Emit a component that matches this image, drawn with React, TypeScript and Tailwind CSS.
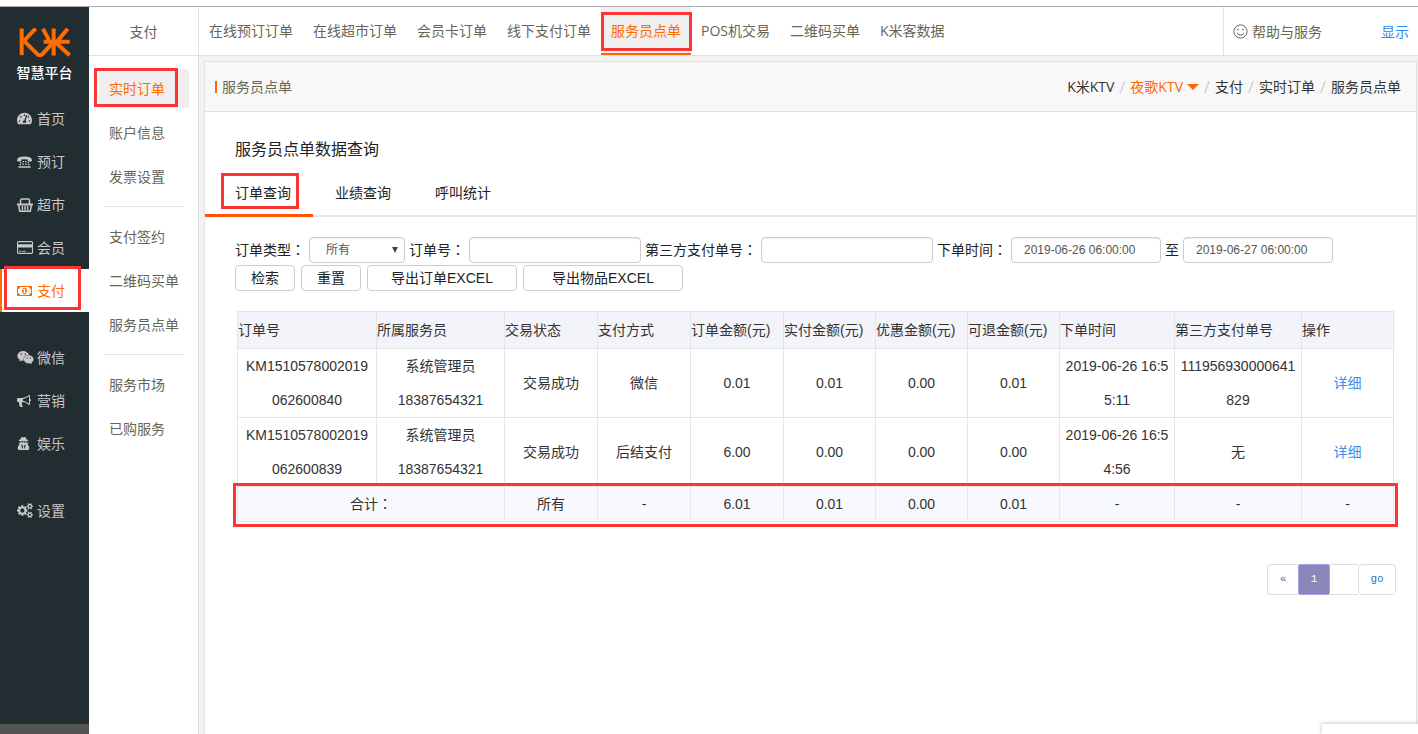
import React, { Fragment } from "react";
import type { ReactNode } from "react";
import { FaTachometerAlt, FaUserSecret, FaWeixin } from "react-icons/fa";

const Mark = ({ className }: { className: string }) => (
  <span aria-hidden="true" className={`pointer-events-none absolute z-10 border-3 border-[#fa3534] ${className}`} />
);

const Colon = () => <span className="font-['Noto_Sans_CJK_TC',sans-serif] leading-none">：</span>;

const Logo = () => (
  <svg viewBox="22 14 156 86" className="h-[29px] w-[52px]" fill="none" stroke="#ff6c00" strokeWidth="12" aria-hidden="true">
    <path d="M30 15v80" />
    <path d="M72 15 37 52l40 40q8 7 15 0l34-37" strokeLinejoin="round" />
    <path d="M96 55h78M126 15v81M94 16l18 34M168 16l-30 36M132 57l42 38" />
  </svg>
);

const PhoneIcon = () => (
  <svg viewBox="0 0 15 12" className="h-[12px] w-[15px]" fill="currentColor" aria-hidden="true">
    <path d="M0 4.6Q0 .4 7.5 .4T15 4.6q0 .9-.8.9h-2.6q-.9 0-.9-.9v-1Q7.500 2.700 4.300 3.600v1q0 .9-.9.900H.8q-.8 0-.8-.9z" />
    <path d="M3 6h1.400v1.300H3zM5.600 5h1.400v1.300H5.600zM8.100 5h1.400v1.300H8.100zM10.600 6h1.400v1.300h-1.400zM2.400 8h1.600v1.300H2.400zM5.300 7.400h1.600v1.400H5.300zM8.100 7.400h1.600v1.400H8.100zM11 8h1.600v1.300H11zM1.400 10.200h12.200v1.600H1.400z" />
  </svg>
);

const BasketIcon = () => (
  <svg viewBox="0 0 16 14" className="h-[14px] w-[16px]" fill="none" stroke="currentColor" aria-hidden="true">
    <path d="M3.500 6V2.500q0-1.600 1.600-1.600h5.800q1.600 0 1.600 1.600V6" strokeWidth="1.500" />
    <path d="M0 6.500h16" strokeWidth="2" />
    <path d="M1.700 7l1 6.200h10.600l1-6.200" strokeWidth="1.500" />
    <path d="M5.400 8v4.500M8 8v4.500M10.600 8v4.500" strokeWidth="1.400" />
  </svg>
);

const CardIcon = () => (
  <svg viewBox="0 0 1920 1792" className="h-[15px] w-[16px]" fill="currentColor" aria-hidden="true">
    <path d="M1760 128q66 0 113 47t47 113v1216q0 66-47 113t-113 47h-1600q-66 0-113-47t-47-113v-1216q0-66 47-113t113-47h1600zm-1600 128q-13 0-22.5 9.5t-9.5 22.5v224h1664v-224q0-13-9.5-22.5t-22.5-9.5h-1600zm1600 1280q13 0 22.5-9.5t9.5-22.5v-608h-1664v608q0 13 9.5 22.5t22.5 9.5h1600zm-1504-128v-128h256v128h-256zm384 0v-128h384v128h-384z" />
  </svg>
);

const MoneyIcon = () => (
  <svg viewBox="0 0 1920 1792" className="h-[14px] w-[15px]" fill="currentColor" aria-hidden="true">
    <path d="M768 1152h384v-96h-128v-448h-114l-148 137 77 80q42-37 55-57h2v288h-128v96zm512-256q0 70-21 142t-59.5 134-101.5 101-138 39-138-39-101.5-101-59.5-134-21-142 21-142 59.5-134 101.5-101 138-39 138 39 101.5 101 59.5 134 21 142zm512 256v-512q-106 0-181-75t-75-181h-1152q0 106-75 181t-181 75v512q106 0 181 75t75 181h1152q0-106 75-181t181-75zm128-832v1152q0 26-19 45t-45 19h-1792q-26 0-45-19t-19-45v-1152q0-26 19-45t45-19h1792q26 0 45 19t19 45z" />
  </svg>
);

const HornIcon = () => (
  <svg viewBox="0 0 1792 1792" className="h-[14px] w-[14px]" fill="currentColor" aria-hidden="true">
    <path d="M1664 640q53 0 90.5 37.5t37.5 90.5-37.5 90.5-90.5 37.5v384q0 52-38 90t-90 38q-417-347-812-380-58 19-91 66t-31 100.5 40 92.5q-20 33-23 65.5t6 58 33.5 55 48 50 61.5 50.5q-29 58-111.5 83t-168.5 11.5-132-55.5q-7-23-29.5-87.5t-32-94.5-23-89-15-101 3.5-98.5 22-110.5h-122q-66 0-113-47t-47-113v-192q0-66 47-113t113-47h480q435 0 896-384 52 0 90 38t38 90v384zm-128 604v-954q-394 302-768 343v270q377 42 768 341z" />
  </svg>
);

const CogsIcon = () => (
  <svg viewBox="0 0 1920 1792" className="h-[15px] w-[16px]" fill="currentColor" aria-hidden="true">
    <path d="M896 896q0-106-75-181t-181-75-181 75-75 181 75 181 181 75 181-75 75-181zm768 512q0-52-38-90t-90-38-90 38-38 90q0 53 37.5 90.5t90.5 37.5 90.5-37.5 37.5-90.5zm0-1024q0-52-38-90t-90-38-90 38-38 90q0 53 37.5 90.5t90.5 37.5 90.5-37.5 37.5-90.5zm-384 421v185q0 10-7 19.5t-16 10.5l-155 24q-11 35-32 76 34 48 90 115 7 11 7 20 0 12-7 19-23 30-82.5 89.5t-78.5 59.5q-11 0-21-7l-115-90q-37 19-77 31-11 108-23 155-7 24-30 24h-186q-11 0-20-7.5t-10-17.5l-23-153q-34-10-75-31l-118 89q-7 7-20 7-11 0-21-8-144-133-144-160 0-9 7-19 10-14 41-53t47-61q-23-44-35-82l-152-24q-10-1-17-9.5t-7-19.5v-185q0-10 7-19.5t16-10.5l155-24q11-35 32-76-34-48-90-115-7-11-7-20 0-12 7-20 22-30 82-89t79-59q11 0 21 7l115 90q34-18 77-32 11-108 23-154 7-24 30-24h186q11 0 20 7.5t10 17.5l23 153q34 10 75 31l118-89q8-7 20-7 11 0 21 8 144 133 144 160 0 8-7 19-12 16-42 54t-45 60q23 48 34 82l152 23q10 2 17 10.5t7 19.5zm640 533v140q0 16-149 31-12 27-30 52 51 113 51 138 0 4-4 7-122 71-124 71-8 0-46-47t-52-68q-20 2-30 2t-30-2q-14 21-52 68t-46 47q-2 0-124-71-4-3-4-7 0-25 51-138-18-25-30-52-149-15-149-31v-140q0-16 149-31 13-29 30-52-51-113-51-138 0-4 4-7 4-2 35-20t59-34 30-16q8 0 46 46.5t52 67.5q20-2 30-2t30 2q51-71 92-112l6-2q4 0 124 70 4 3 4 7 0 25-51 138 17 23 30 52 149 15 149 31zm0-1024v140q0 16-149 31-12 27-30 52 51 113 51 138 0 4-4 7-122 71-124 71-8 0-46-47t-52-68q-20 2-30 2t-30-2q-14 21-52 68t-46 47q-2 0-124-71-4-3-4-7 0-25 51-138-18-25-30-52-149-15-149-31v-140q0-16 149-31 13-29 30-52-51-113-51-138 0-4 4-7 4-2 35-20t59-34 30-16q8 0 46 46.5t52 67.5q20-2 30-2t30 2q51-71 92-112l6-2q4 0 124 70 4 3 4 7 0 25-51 138 17 23 30 52 149 15 149 31z" />
  </svg>
);

const SmileIcon = () => (
  <svg viewBox="0 0 15 15" className="h-[15px] w-[15px]" fill="none" stroke="currentColor" aria-hidden="true">
    <circle cx="7.5" cy="7.5" r="6.6" strokeWidth="1" />
    <path d="M4.200 8.800q.7 2.400 3.300 2.400t3.300-2.400" strokeWidth="1" />
    <circle cx="5" cy="5.6" r=".8" fill="currentColor" stroke="none" />
    <circle cx="10" cy="5.6" r=".8" fill="currentColor" stroke="none" />
  </svg>
);

type MainItem = { label: string; icon: ReactNode; active?: boolean };

const mainGroups: MainItem[][] = [
  [
    { label: "首页", icon: <FaTachometerAlt size={15} /> },
    { label: "预订", icon: <PhoneIcon /> },
    { label: "超市", icon: <BasketIcon /> },
    { label: "会员", icon: <CardIcon /> },
    { label: "支付", icon: <MoneyIcon />, active: true },
  ],
  [
    { label: "微信", icon: <FaWeixin size={17} /> },
    { label: "营销", icon: <HornIcon /> },
    { label: "娱乐", icon: <FaUserSecret size={13} /> },
  ],
  [{ label: "设置", icon: <CogsIcon /> }],
];

const subGroups = [
  ["实时订单", "账户信息", "发票设置"],
  ["支付签约", "二维码买单", "服务员点单"],
  ["服务市场", "已购服务"],
];

const topTabs = [
  "在线预订订单",
  "在线超市订单",
  "会员卡订单",
  "线下支付订单",
  "服务员点单",
  "POS机交易",
  "二维码买单",
  "K米客数据",
];

const columns = [
  "订单号",
  "所属服务员",
  "交易状态",
  "支付方式",
  "订单金额(元)",
  "实付金额(元)",
  "优惠金额(元)",
  "可退金额(元)",
  "下单时间",
  "第三方支付单号",
  "操作",
];

const columnWidths = [
  "w-[139px]",
  "w-[128px]",
  "w-[93px]",
  "w-[93px]",
  "w-[93px]",
  "w-[92px]",
  "w-[92px]",
  "w-[92px]",
  "w-[115px]",
  "w-[127px]",
  "w-[92px]",
];

const orders: string[][][] = [
  [
    ["KM1510578002019", "062600840"],
    ["系统管理员", "18387654321"],
    ["交易成功"],
    ["微信"],
    ["0.01"],
    ["0.01"],
    ["0.00"],
    ["0.01"],
    ["2019-06-26 16:5", "5:11"],
    ["111956930000641", "829"],
  ],
  [
    ["KM1510578002019", "062600839"],
    ["系统管理员", "18387654321"],
    ["交易成功"],
    ["后结支付"],
    ["6.00"],
    ["0.00"],
    ["0.00"],
    ["0.00"],
    ["2019-06-26 16:5", "4:56"],
    ["无"],
  ],
];

const totals = ["所有", "-", "6.01", "0.01", "0.00", "0.01", "-", "-", "-"];

const inputClass = "h-[26px] rounded border border-[#ccc] bg-white px-3 text-[12px] text-[#555] shadow-[inset_0_1px_1px_rgba(0,0,0,0.075)]";
const buttonClass = "h-[26px] rounded border border-[#ccc] bg-white text-[14px] leading-6 text-[#222]";

function MainNav() {
  return (
    <nav aria-label="主菜单" className="flex w-[89px] shrink-0 flex-col bg-[#222d32] text-[#c8c8c8]">
      <div className="flex h-[90px] flex-col items-center pt-[21px]">
        <Logo />
        <span className="mt-[6px] text-[14px] leading-5 font-medium text-white">智慧平台</span>
      </div>
      <div className="flex flex-1 flex-col gap-6">
        {mainGroups.map((group, i) => (
          <div key={i}>
            {group.map((item) => (
              <a
                key={item.label}
                href="#"
                className={`relative flex h-[43px] items-center text-[14px] ${
                  item.active ? "border-l-2 border-[#ff6c00] bg-white pl-[15px] text-[#ff6c00]" : "pl-[17px]"
                }`}
              >
                <span className="w-5">{item.icon}</span>
                {item.label}
                {item.active && <Mark className="top-[-3px] left-[2px] h-[44px] w-[77px]" />}
              </a>
            ))}
          </div>
        ))}
      </div>
      <div className="h-[10px] bg-[#545454]" />
    </nav>
  );
}

function SubNav() {
  return (
    <nav aria-label="支付菜单" className="w-[110px] shrink-0 border-r border-[#e2e2e2] bg-white text-[14px] text-[#666655]">
      <h2 className="flex h-[49px] items-center justify-center border-b border-[#e2e2e2]">支付</h2>
      <div className="pt-[13px] pr-[9px] pl-[10px]">
        {subGroups.map((group, i) => (
          <Fragment key={i}>
            {i > 0 && <hr className="mx-[5px] my-[10px] border-[#e2e2e2]" />}
            {group.map((label, j) => {
              const active = i === 0 && j === 0;
              return (
                <a
                  key={label}
                  href="#"
                  className={`relative mb-[5px] flex h-[39px] items-center rounded-xs pl-[10px] ${
                    active ? "bg-[#efefef] text-[#ff6c00]" : ""
                  }`}
                >
                  {label}
                  {active && <Mark className="top-[-1px] left-[-5px] h-[39px] w-[84px]" />}
                </a>
              );
            })}
          </Fragment>
        ))}
      </div>
    </nav>
  );
}

function TopBar() {
  return (
    <header className="flex h-[49px] shrink-0 border-b border-[#e2e2e2] bg-white text-[14px] text-[#666655]">
      <nav aria-label="支付分类" className="flex flex-1">
        {topTabs.map((tab) => {
          const active = tab === "服务员点单";
          return (
            <a
              key={tab}
              href="#"
              className={`relative flex items-center border-b-2 px-[10px] whitespace-nowrap ${
                active ? "border-[#ff6600] bg-[#efefef] text-[#ff6c00]" : "border-transparent"
              }`}
            >
              {tab}
              {active && <Mark className="top-[5px] left-0 h-[39px] w-[91px]" />}
            </a>
          );
        })}
      </nav>
      <div className="flex w-[195px] shrink-0 items-center justify-between border-l border-[#e2e2e2] pr-[9px] pl-[9px]">
        <a href="#" className="flex items-center gap-1">
          <SmileIcon />
          帮助与服务
        </a>
        <a href="#" className="text-[#2f86f6]">显示</a>
      </div>
    </header>
  );
}

function Filters() {
  return (
    <form className="pt-5 pl-[30px] text-[14px] text-[#222]" onSubmit={(e) => e.preventDefault()}>
      <div className="flex flex-wrap items-center gap-x-1 whitespace-nowrap">
        <label htmlFor="type">订单类型<Colon /></label>
        <span className="relative">
          <select id="type" className={`${inputClass} w-[96px] appearance-none pl-4`}>
            <option>所有</option>
          </select>
          <svg viewBox="0 0 6 6" className="pointer-events-none absolute top-[10px] right-[7px] h-[6px] w-[6px]" aria-hidden="true">
            <path d="M0 0h6L3 6z" fill="#444" />
          </svg>
        </span>
        <label htmlFor="order">订单号<Colon /></label>
        <input id="order" className={`${inputClass} w-[172px]`} />
        <label htmlFor="third">第三方支付单号<Colon /></label>
        <input id="third" className={`${inputClass} w-[172px]`} />
        <label htmlFor="from">下单时间<Colon /></label>
        <input id="from" defaultValue="2019-06-26 06:00:00" className={`${inputClass} w-[150px]`} />
        <label htmlFor="to">至</label>
        <input id="to" defaultValue="2019-06-27 06:00:00" className={`${inputClass} w-[150px]`} />
      </div>
      <div className="mt-[2px] flex flex-wrap gap-[6px]">
        <button type="submit" className={`${buttonClass} w-[60px]`}>检索</button>
        <button type="reset" className={`${buttonClass} w-[60px]`}>重置</button>
        <button type="button" className={`${buttonClass} w-[150px]`}>导出订单EXCEL</button>
        <button type="button" className={`${buttonClass} w-[160px]`}>导出物品EXCEL</button>
      </div>
    </form>
  );
}

function OrderTable() {
  return (
    <div className="relative mt-5 mr-[22px] ml-8">
      <table className="w-full table-fixed border-collapse text-center text-[14px] leading-[34px] text-[#333]">
        <colgroup>
          {columnWidths.map((width, i) => (
            <col key={i} className={width} />
          ))}
        </colgroup>
        <thead>
          <tr className="h-[37px] bg-[#f3f4f9] text-left">
            {columns.map((column) => (
              <th key={column} className="border border-[#e4e5e7] p-0 font-normal whitespace-nowrap">
                {column}
              </th>
            ))}
          </tr>
        </thead>
        <tbody>
          {orders.map((order, i) => (
            <tr key={i} className="h-[69px]">
              {order.map((lines, j) => (
                <td key={j} className="border border-[#e4e5e7] p-0">
                  {lines.map((line) => (
                    <div key={line}>{line}</div>
                  ))}
                </td>
              ))}
              <td className="border border-[#e4e5e7] p-0">
                <a href="#" className="text-[#3c8fe8]">详细</a>
              </td>
            </tr>
          ))}
        </tbody>
        <tfoot>
          <tr className="h-[35px] bg-[#f8f9ff]">
            <td colSpan={2} className="border border-[#e4e5e7] p-0">合计<Colon /></td>
            {totals.map((value, i) => (
              <td key={i} className="border border-[#e4e5e7] p-0">{value}</td>
            ))}
          </tr>
        </tfoot>
      </table>
      <Mark className="-right-1 -bottom-[5px] -left-1 h-[44px]" />
    </div>
  );
}

function Pagination() {
  return (
    <nav aria-label="分页" className="mt-[42px] mr-5 flex h-[31px] justify-end font-['Liberation_Mono',monospace] text-[11px] text-[#337ab7]">
      <button className="w-[31px] rounded-l border border-r-0 border-[#ddd] bg-white">«</button>
      <button className="w-[32px] rounded-xs border border-[#a6a3ea] bg-[#8c87b9] text-white">1</button>
      <input aria-label="页码" className="w-[28px] border-y border-[#ddd] bg-white text-center" />
      <button className="w-[38px] rounded border border-[#ddd] bg-white">go</button>
    </nav>
  );
}

const Slash = () => <span className="w-[6px] text-center text-[16px] text-[#ccc]">/</span>;

export default function App() {
  return (
    <div className="relative flex min-h-screen flex-col overflow-hidden bg-white font-['Open_Sans','Noto_Sans_CJK_SC',sans-serif]">
      <div className="h-[7px] shrink-0 border-b border-[#b0b0b0]" />
      <div className="flex flex-1">
        <MainNav />
        <SubNav />
        <div className="flex min-w-0 flex-1 flex-col bg-[#f2f2f2]">
          <TopBar />
          <main className="mt-[5px] mr-px ml-[5px] flex-1 border border-b-0 border-[#e2e2e2] bg-white">
            <div className="flex h-[50px] items-center justify-between border-b border-[#e2e2e2] bg-[#f8f8f8] pr-[15px] pl-[10px] text-[14px]">
              <h1 className="flex items-center gap-[5px] text-[#666655]">
                <span className="h-3 w-[2px] bg-[#ff6600]" />
                服务员点单
              </h1>
              <nav aria-label="位置" className="flex items-center gap-[5px] text-[#333]">
                <a href="#">K米KTV</a>
                <Slash />
                <a href="#" className="flex items-center gap-1 text-[#ff6600]">
                  夜歌KTV
                  <svg viewBox="0 0 12 6" className="h-[6px] w-[12px]" aria-hidden="true">
                    <path d="M0 0h12L6 6z" fill="#ff6600" />
                  </svg>
                </a>
                <Slash />
                <a href="#">支付</a>
                <Slash />
                <a href="#">实时订单</a>
                <Slash />
                <span>服务员点单</span>
              </nav>
            </div>
            <div className="font-['Liberation_Sans','Noto_Sans_CJK_SC',sans-serif]">
              <h2 className="pt-[26px] pl-[30px] text-[16px] leading-6 text-[#222]">服务员点单数据查询</h2>
              <div className="mt-2 flex h-[47px] items-stretch border-b-2 border-[#e7e7eb] text-[14px] text-[#222]">
                <button className="relative -mb-[2px] border-b-3 border-[#ff5500] pt-[2px] pr-[22px] pl-[30px]">
                  订单查询
                  <Mark className="top-[3px] left-4 h-9 w-[78px]" />
                </button>
                <button className="px-[22px] pt-[2px]">业绩查询</button>
                <button className="px-[22px] pt-[2px]">呼叫统计</button>
              </div>
              <Filters />
              <OrderTable />
              <Pagination />
            </div>
          </main>
        </div>
      </div>
      <div className="absolute right-0 bottom-0 h-[10px] w-24 rounded-tl-xs bg-white shadow-[0_0_4px_rgba(0,0,0,0.3)]" />
    </div>
  );
}
